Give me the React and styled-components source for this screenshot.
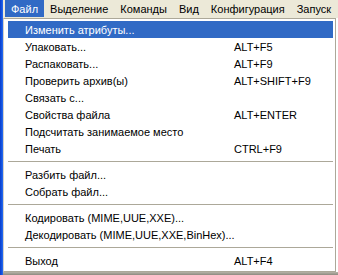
import styled, { createGlobalStyle } from "styled-components";

const Global = createGlobalStyle`
  html, body {
    margin: 0;
    padding: 0;
    background: #ffffff;
  }
  body {
    font-family: "Liberation Sans", Arial, sans-serif;
    font-size: 11px;
    color: #000;
  }
`;

const Screen = styled.div`
  display: flex;
  width: 338px;
  height: 275px;
  overflow: hidden;
`;

const Frame = styled.div`
  width: 3px;
  flex: none;
  background: linear-gradient(to right, #0a3ccc, #1556e0 60%, #2a6ef2);
`;

const Main = styled.div`
  flex: 1;
  display: flex;
  flex-direction: column;
  min-width: 0;
`;

const MenuBar = styled.div`
  display: flex;
  height: 18px;
  padding-left: 2px;
  background: #ece9d8;
`;

const BarItem = styled.div`
  display: flex;
  align-items: center;
  padding: 0 ${(p) => p.$pad || 6}px;
  height: 17px;
  white-space: nowrap;
  background: ${(p) => (p.$active ? "#316ac5" : "transparent")};
  color: ${(p) => (p.$active ? "#fff" : "#000")};
`;

const Popup = styled.div`
  width: 333px;
  box-sizing: border-box;
  border: 1px solid #aca899;
  border-left-color: #d4d0c8;
  padding: 2px 2px 2px 4px;
  background: #fff;
`;

const Item = styled.div`
  display: flex;
  align-items: center;
  height: 17px;
  white-space: nowrap;
  background: ${(p) => (p.$active ? "#316ac5" : "transparent")};
  color: ${(p) => (p.$active ? "#fff" : "#000")};
`;

const Label = styled.span`
  width: 209px;
  padding-left: 17px;
  flex: none;
`;

const Shortcut = styled.span`
  flex: none;
`;

const Separator = styled.div`
  height: 9px;
  display: flex;
  align-items: center;
  &::before {
    content: "";
    flex: 1;
    height: 1px;
    background: #aca899;
  }
`;

const Shadow = styled.div`
  flex: 1;
  background: linear-gradient(to bottom, #b8b4a8, #8e8a80);
`;

const bar = [
  ["Файл", true],
  ["Выделение"],
  ["Команды"],
  ["Вид"],
  ["Конфигурация"],
  ["Запуск"],
];

const menu = [
  ["Изменить атрибуты...", "", true],
  ["Упаковать...", "ALT+F5"],
  ["Распаковать...", "ALT+F9"],
  ["Проверить архив(ы)", "ALT+SHIFT+F9"],
  ["Связать с...", ""],
  ["Свойства файла", "ALT+ENTER"],
  ["Подсчитать занимаемое место", ""],
  ["Печать", "CTRL+F9"],
  null,
  ["Разбить файл...", ""],
  ["Собрать файл...", ""],
  null,
  ["Кодировать (MIME,UUE,XXE)...", ""],
  ["Декодировать (MIME,UUE,XXE,BinHex)...", ""],
  null,
  ["Выход", "ALT+F4"],
];

export default function App() {
  return (
    <>
      <Global />
      <Screen>
        <Frame />
        <Main>
          <MenuBar>
            {bar.map(([t, a]) => (
              <BarItem key={t} $active={a}>
                {t}
              </BarItem>
            ))}
          </MenuBar>
          <Popup>
            {menu.map((m, i) =>
              m ? (
                <Item key={i} $active={m[2]}>
                  <Label>{m[0]}</Label>
                  <Shortcut>{m[1]}</Shortcut>
                </Item>
              ) : (
                <Separator key={i} />
              )
            )}
          </Popup>
          <Shadow />
        </Main>
      </Screen>
    </>
  );
}
